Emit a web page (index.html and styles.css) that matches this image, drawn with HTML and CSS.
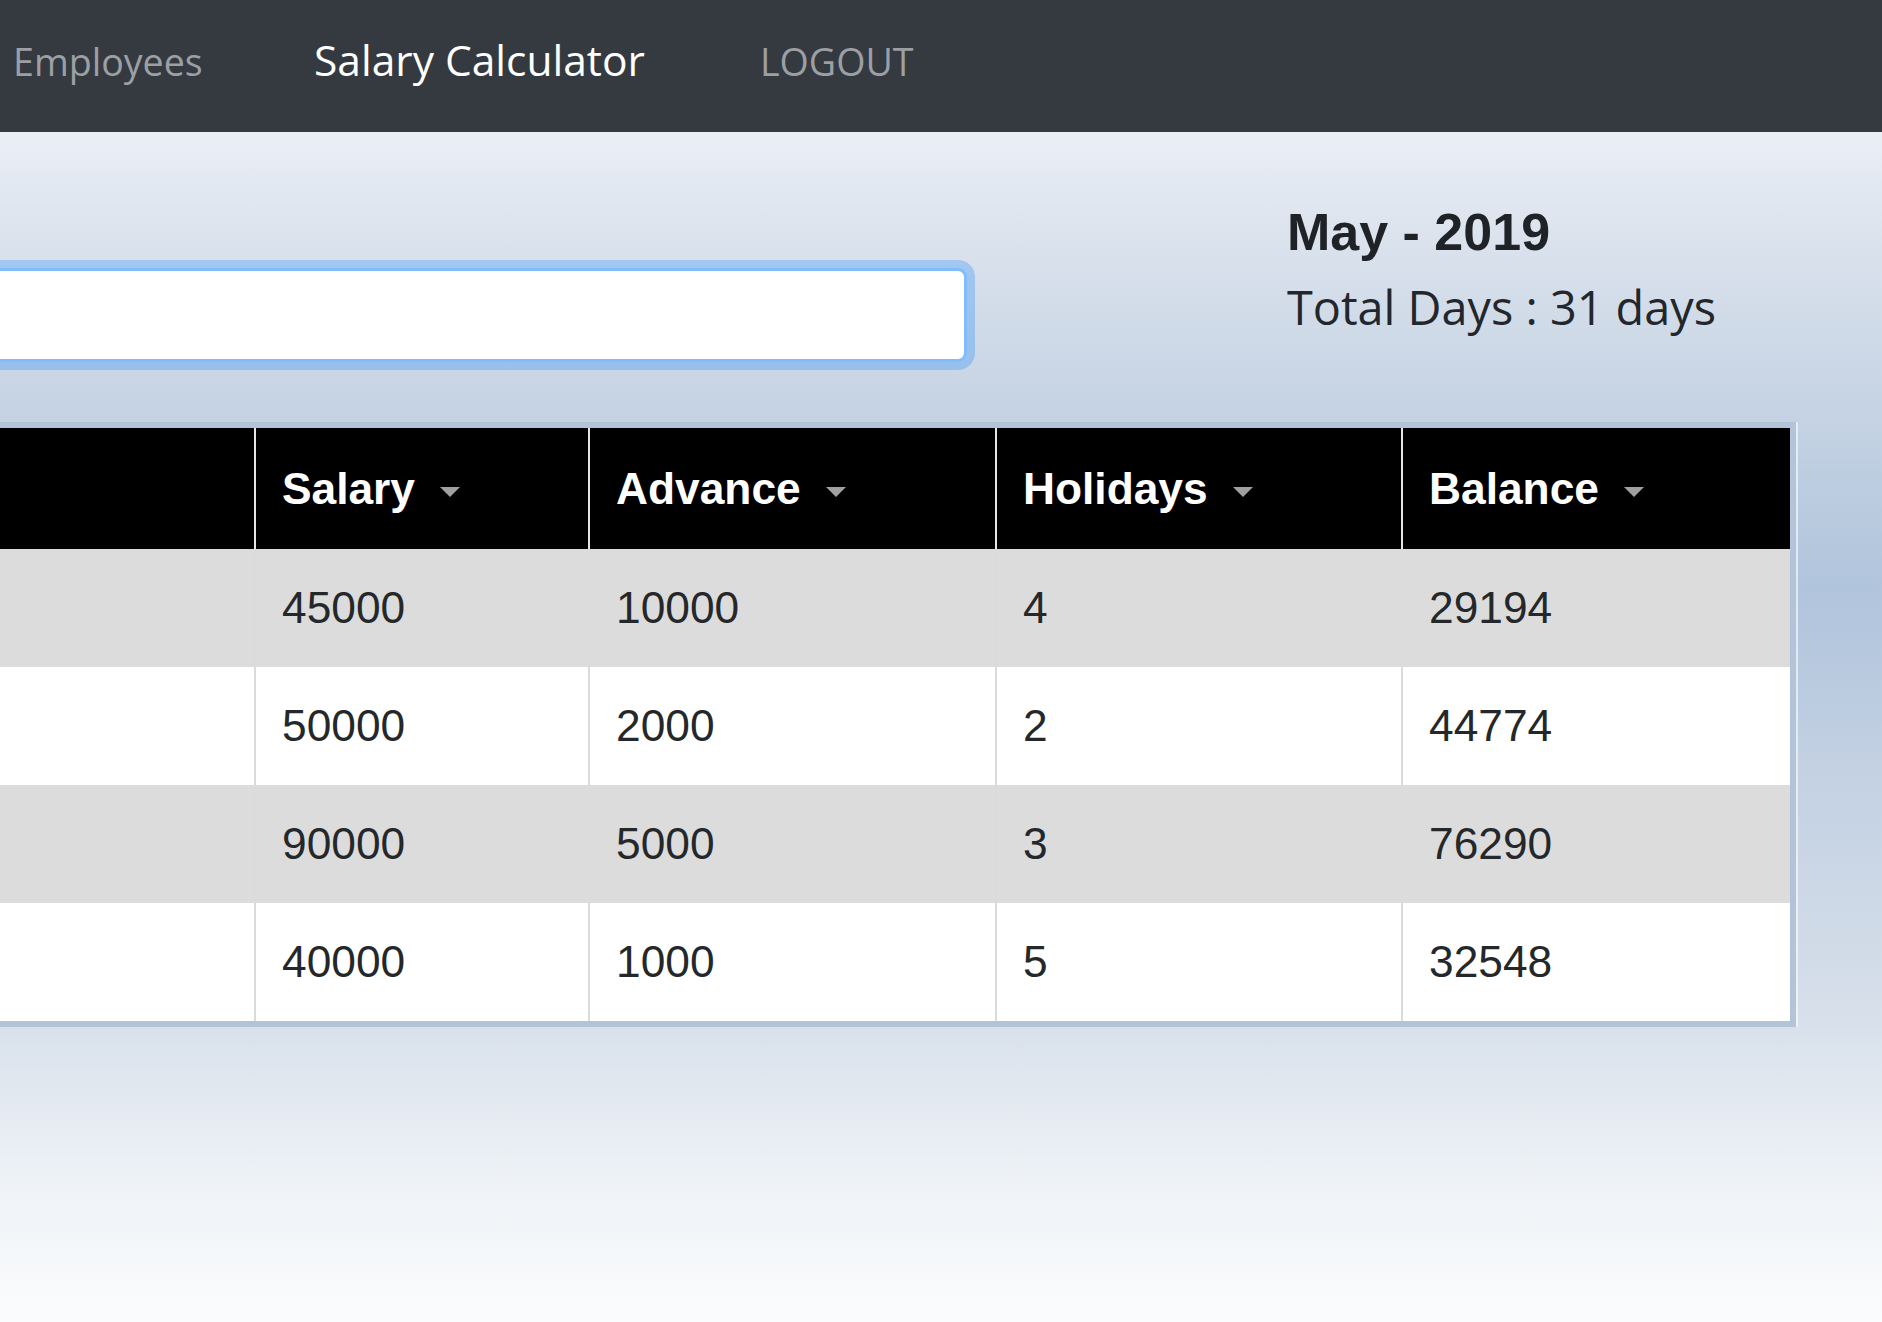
FILE: index.html
```html
<!DOCTYPE html>
<html lang="en">
<head>
<meta charset="utf-8">
<title>Salary Calculator</title>
<link rel="stylesheet" href="styles.css">
</head>
<body>
<nav class="navbar">
  <a class="nav-link nav-employees" href="#">Employees</a>
  <a class="nav-link nav-salary active" href="#">Salary Calculator</a>
  <a class="nav-link nav-logout" href="#">LOGOUT</a>
</nav>
<main class="content">
  <div class="top-row">
    <div class="search-wrap"><input class="search" type="text" aria-label="Search"></div>
    <div class="period">
      <h5 class="month">May - 2019</h5>
      <p class="days">Total Days : 31 days</p>
    </div>
  </div>
  <table class="salary-table">
    <colgroup>
      <col class="c-name"><col class="c-salary"><col class="c-advance"><col class="c-holidays"><col class="c-balance">
    </colgroup>
    <thead>
      <tr>
        <th></th>
        <th>Salary <span class="caret"></span></th>
        <th>Advance <span class="caret"></span></th>
        <th>Holidays <span class="caret"></span></th>
        <th>Balance <span class="caret"></span></th>
      </tr>
    </thead>
    <tbody>
      <tr><td></td><td>45000</td><td>10000</td><td>4</td><td>29194</td></tr>
      <tr><td></td><td>50000</td><td>2000</td><td>2</td><td>44774</td></tr>
      <tr><td></td><td>90000</td><td>5000</td><td>3</td><td>76290</td></tr>
      <tr><td></td><td>40000</td><td>1000</td><td>5</td><td>32548</td></tr>
    </tbody>
  </table>
</main>
</body>
</html>
```

FILE: styles.css
```css
* { box-sizing: border-box; }
html, body { margin: 0; padding: 0; }
body {
  min-height: 1322px;
  overflow: hidden;
  font-family: "Open Sans", "Noto Sans", sans-serif;
  color: #212529;
  background: linear-gradient(180deg, #eaeff6 0, #eaeff6 132px, #d9e1ec 253px, #c4d2e3 422px, #b0c4dc 590px, #c2d0e2 759px, #d6dfea 1012px, #eef2f6 1180px, #fbfcfd 1322px);
}
.navbar {
  height: 132px;
  background: #343a40;
  display: flex;
  align-items: baseline;
  padding: 39px 0 0 13px;
}
.nav-link {
  font-size: 37.6px;
  line-height: 42px;
  color: #9c9fa3;
  text-decoration: none;
  white-space: nowrap;
}
.nav-employees { width: 301px; }
.nav-salary {
  width: 446px;
  font-size: 42.5px;
  line-height: 42.5px;
  color: #fff;
}
.content { margin-left: -40px; }
.top-row { display: flex; align-items: flex-start; height: 290px; }
.search-wrap { width: 1007px; flex: none; padding-top: 136px; }
.search {
  display: block;
  width: 100%;
  height: 94px;
  border: 3px solid #80bdff;
  border-radius: 9px;
  box-shadow: 0 0 0 8px rgba(0, 123, 255, .25);
  background: #fff;
  outline: none;
}
.period { margin-left: 320px; padding-top: 70px; }
.month {
  margin: 0;
  font-family: "Liberation Sans", Arial, sans-serif;
  font-weight: 700;
  font-size: 52px;
  line-height: 60px;
  color: #1f2327;
}
.days {
  margin: 13px 0 0;
  font-size: 46.8px;
  line-height: 64px;
  color: #23272b;
}
.salary-table {
  width: 1836px;
  table-layout: fixed;
  border-collapse: separate;
  border-spacing: 0;
  border: 6px solid #b3c3d8;
  box-shadow: 2px 0 0 rgba(255, 255, 255, .6);
  font-family: "Liberation Sans", Arial, sans-serif;
}
.c-name { width: 288px; }
.c-salary { width: 334px; }
.c-advance { width: 407px; }
.c-holidays { width: 406px; }
.c-balance { width: 389px; }
.salary-table th, .salary-table td {
  padding: 0 0 0 26px;
  text-align: left;
  white-space: nowrap;
}
.salary-table th + th { border-left: 2px solid #e4e6e8; }
.salary-table td + td { border-left: 2px solid #d9dcdf; }
.salary-table th {
  height: 121px;
  background: #000;
  color: #fff;
  font-size: 44.3px;
  font-weight: 700;
}
.salary-table td {
  height: 118px;
  font-size: 44.3px;
  color: #25282b;
  background: #fff;
}
.salary-table tbody tr:nth-child(odd) td { background: #dcdcdc; }
.caret {
  display: inline-block;
  width: 0;
  height: 0;
  margin-left: 13px;
  vertical-align: middle;
  border-left: 10px solid transparent;
  border-right: 10px solid transparent;
  border-top: 10px solid #a0a0a0;
}
```
